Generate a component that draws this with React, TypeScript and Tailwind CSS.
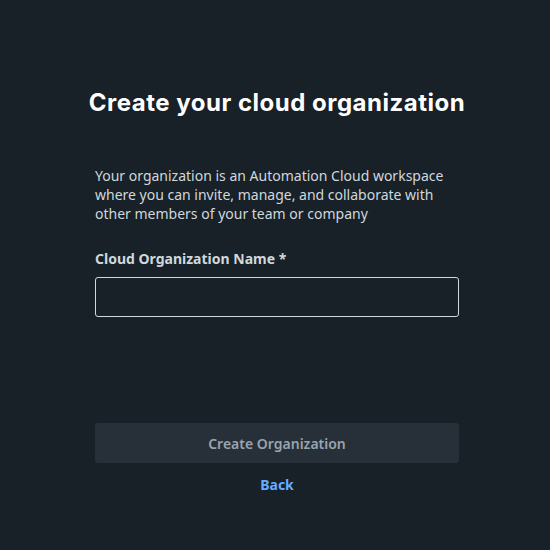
export default function App() {
  return (
    <div className="min-h-[550px] w-full bg-[#182028] font-['Noto_Sans',sans-serif]">
      <div className="ml-[95px] flex w-[364px] flex-col pt-[86px]">
        <h1 className="-mx-[20px] text-center font-['Inter',sans-serif] text-[24px] leading-[34px] font-bold tracking-[0.5px] text-white">
          Create your cloud organization
        </h1>

        <p className="mt-[46px] text-[14px] leading-[19px] text-[#cfd8dd]">
          Your organization is an Automation Cloud workspace where you can invite, manage, and collaborate with other
          members of your team or company
        </p>

        <label className="mt-[26px] text-[14px] leading-[19px] font-bold text-[#cfd8dd]">
          Cloud Organization Name *
        </label>
        <input
          type="text"
          className="mt-[9px] h-10 w-full rounded-[3px] border border-[#cfd8dd] bg-transparent px-3 text-[14px] text-white outline-none"
        />

        <button
          disabled
          className="mt-[106px] h-10 w-full rounded-[3px] bg-[#273039] text-[14px] font-semibold text-[#98a4ad]"
        >
          Create Organization
        </button>
        <a href="#" className="mt-[12px] self-center text-[14px] leading-[20px] font-bold text-[#66adff]">
          Back
        </a>
      </div>
    </div>
  );
}
